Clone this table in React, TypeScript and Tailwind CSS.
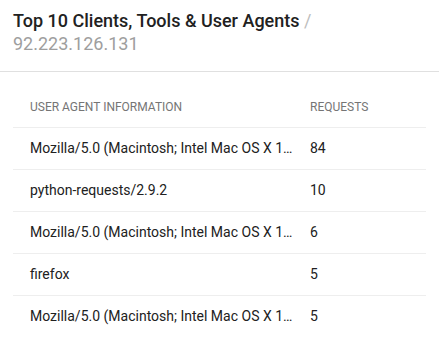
const rows = [
  { agent: "Mozilla/5.0 (Macintosh; Intel Mac OS X 10_15_7) AppleWebKit/537.36", requests: 84 },
  { agent: "python-requests/2.9.2", requests: 10 },
  { agent: "Mozilla/5.0 (Macintosh; Intel Mac OS X 10_14_6) AppleWebKit/605.1.15", requests: 6 },
  { agent: "firefox", requests: 5 },
  { agent: "Mozilla/5.0 (Macintosh; Intel Mac OS X 10.15; rv:84.0) Gecko/20100101", requests: 5 },
];

export default function App() {
  return (
    <div className="h-[339px] w-[439px] overflow-hidden bg-white font-['Roboto',sans-serif]">
      <div className="h-[72px] border-b border-[#e0e0e0] px-[13px] pt-[9px]">
        <h2 className="text-[18px] leading-[23px] font-medium text-[#212121]">
          Top 10 Clients, Tools &amp; User Agents <span className="font-normal text-[#bdbdbd]">/</span>
          <br />
          <span className="font-normal text-[#9e9e9e]">92.223.126.131</span>
        </h2>
      </div>

      <div className="px-[13px] pt-[13px]">
        <table className="w-full table-fixed border-collapse text-left">
          <thead>
            <tr className="h-[42px] border-b border-[#eeeeee]">
              <th className="w-[297px] px-[17px] pt-[3px] text-[12px] font-normal text-[#757575]">USER AGENT INFORMATION</th>
              <th className="px-0 pt-[3px] text-[12px] font-normal text-[#757575]">REQUESTS</th>
            </tr>
          </thead>
          <tbody>
            {rows.map((row, i) => (
              <tr key={i} className="h-[42px] border-b border-[#eeeeee] last:border-b-0">
                <td className="truncate pl-[17px] pr-[12px] text-[14px] text-[#212121]">{row.agent}</td>
                <td className="text-[14px] text-[#212121]">{row.requests}</td>
              </tr>
            ))}
          </tbody>
        </table>
      </div>
    </div>
  );
}
